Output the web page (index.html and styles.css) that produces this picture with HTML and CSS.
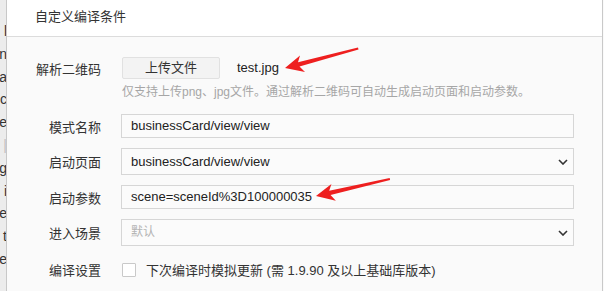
FILE: index.html
```html
<!DOCTYPE html>
<html lang="zh-CN">
<head>
<meta charset="utf-8">
<title>自定义编译条件</title>
<link rel="stylesheet" href="styles.css">
</head>
<body>
<div class="page">
  <div class="side">
    <div class="side-lines">
      <span>l</span><span>n</span><span>a</span><span>c</span><span>e</span><span class="bar">|</span><span>g</span><span>i</span><span>e</span><span>t</span><span>e</span>
    </div>
  </div>
  <div class="dialog">
    <div class="header">自定义编译条件</div>
    <div class="body">
      <div class="row row-upload">
        <div class="label">解析二维码</div>
        <div class="control upload">
          <button class="btn">上传文件</button>
          <span class="file">test.jpg</span>
        </div>
      </div>
      <div class="hint">仅支持上传png、jpg文件。通过解析二维码可自动生成启动页面和启动参数。</div>
      <div class="row">
        <div class="label">模式名称</div>
        <div class="control input">businessCard/view/view</div>
      </div>
      <div class="row">
        <div class="label">启动页面</div>
        <div class="control select">
          <span>businessCard/view/view</span>
          <svg class="chev" width="10" height="6" viewBox="0 0 10 6"><polyline points="1,1 5,5 9,1" fill="none" stroke="#333" stroke-width="1.6"/></svg>
        </div>
      </div>
      <div class="row">
        <div class="label">启动参数</div>
        <div class="control input">scene=sceneId%3D100000035</div>
      </div>
      <div class="row">
        <div class="label">进入场景</div>
        <div class="control select">
          <span class="placeholder">默认</span>
          <svg class="chev" width="10" height="6" viewBox="0 0 10 6"><polyline points="1,1 5,5 9,1" fill="none" stroke="#333" stroke-width="1.6"/></svg>
        </div>
      </div>
      <div class="row row-check">
        <div class="label">编译设置</div>
        <div class="control check">
          <span class="box"></span>
          <span>下次编译时模拟更新 (需 1.9.90 及以上基础库版本)</span>
        </div>
      </div>
    </div>
  </div>
  <svg class="arrows" width="604" height="291" viewBox="0 0 604 291">
    <polygon transform="translate(285,68)" points="0,0 15,-12.5 13,-5.8 73,-20.5 73.5,-18.5 14.5,-1.6 20,4" fill="#ee1f1f"/>
    <polygon transform="translate(316,196) rotate(2)" points="0,0 15,-12.5 13,-5.8 73,-20.5 73.5,-18.5 14.5,-1.6 20,4" fill="#ee1f1f"/>
  </svg>
</div>
</body>
</html>
```

FILE: styles.css
```css
* { box-sizing: border-box; }
html, body { margin: 0; padding: 0; }
body {
  width: 604px;
  height: 291px;
  overflow: hidden;
  background: #fafafa;
  font-family: "Liberation Sans", "Noto Sans CJK SC", sans-serif;
  color: #333;
  font-size: 13px;
}
.page {
  position: relative;
  display: flex;
  width: 604px;
  height: 291px;
}
.side {
  width: 7px;
  flex: none;
  background: #ececec;
  border-right: 1px solid #c8c8c8;
  overflow: hidden;
  position: relative;
}
.side-lines {
  display: flex;
  flex-direction: column;
  align-items: flex-end;
  padding-top: 20px;
  margin-right: -1px;
  font-size: 14px;
  line-height: 22.8px;
  color: #333;
}
.side-lines .bar { color: #c0c0c0; }
.dialog {
  flex: 1;
  display: flex;
  flex-direction: column;
  border-right: 1px solid #c9c9c9;
  margin-right: 1px;
  background: #fafafa;
}
.header {
  height: 37px;
  background: #fff;
  border-bottom: 1px solid #dcdcdc;
  padding-left: 28px;
  line-height: 33px;
  font-size: 13px;
  color: #333;
}
.body {
  padding: 20px 0 0 28px;
  display: flex;
  flex-direction: column;
}
.row {
  display: flex;
  align-items: center;
  gap: 20px;
  margin-bottom: 10px;
}
.label {
  width: 66px;
  text-align: right;
  flex: none;
  color: #333;
  font-size: 13px;
}
.control { width: 453px; }
.upload {
  display: flex;
  align-items: center;
  height: 22px;
}
.btn {
  width: 98px;
  height: 22px;
  border: 1px solid #e1e1e1;
  background: #f3f3f3;
  border-radius: 2px;
  font-family: "Liberation Sans", "Noto Sans CJK SC", sans-serif;
  font-size: 13px;
  color: #333;
  padding: 0;
  margin-left: 1px;
  line-height: 20px;
}
.file {
  margin-left: 17px;
  font-size: 13px;
  color: #222;
  position: relative;
  top: -1px;
}
.row-upload { margin-bottom: 4px; }
.hint {
  padding-left: 87px;
  font-size: 12px;
  color: #a6a6a6;
  line-height: 18px;
  margin-bottom: 13px;
}
.input, .select {
  height: 24px;
  border: 1px solid #d6d6d6;
  background: #fbfbfb;
  padding-left: 9px;
  line-height: 22px;
  color: #222;
  font-size: 13px;
}
.select {
  height: 27px;
  line-height: 25px;
  display: flex;
  align-items: center;
  justify-content: space-between;
  padding-right: 5px;
}
.placeholder { color: #b4b4b4; font-size: 12px; }
.chev { flex: none; }
.row-check { margin-top: 4px; }
.check {
  display: flex;
  align-items: center;
  gap: 10px;
  height: 16px;
  color: #333;
}
.box {
  width: 14px;
  height: 14px;
  border: 1px solid #c9c9c9;
  background: #fff;
  border-radius: 1px;
  margin-left: 1px;
  flex: none;
}
.arrows {
  position: absolute;
  left: 0;
  top: 0;
  pointer-events: none;
}
```
